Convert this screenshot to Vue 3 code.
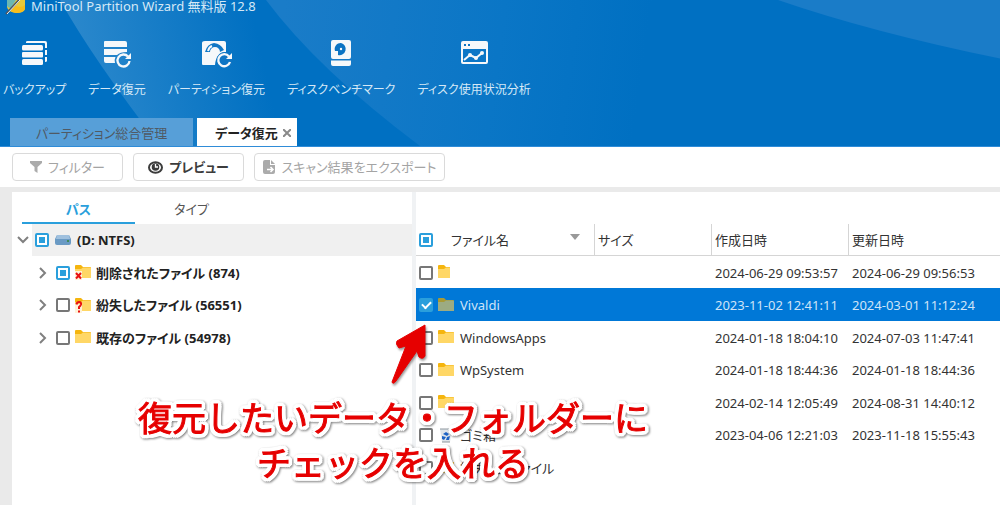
<script setup>
import { ref } from 'vue'

const tools = [
  { id: 'backup', label: 'バックアップ' },
  { id: 'data', label: 'データ復元' },
  { id: 'partition', label: 'パーティション復元' },
  { id: 'bench', label: 'ディスクベンチマーク' },
  { id: 'usage', label: 'ディスク使用状況分析' },
]

const tree = ref([
  { label: '削除されたファイル (874)', mark: '×', checked: false, partial: true },
  { label: '紛失したファイル (56551)', mark: '?', checked: false, partial: false },
  { label: '既存のファイル (54978)', mark: '', checked: false, partial: false },
])

const files = ref([
  { name: '', created: '2024-06-29 09:53:57', modified: '2024-06-29 09:56:53', icon: 'half', checked: false },
  { name: 'Vivaldi', created: '2023-11-02 12:41:11', modified: '2024-03-01 11:12:24', icon: 'folder', checked: true },
  { name: 'WindowsApps', created: '2024-01-18 18:04:10', modified: '2024-07-03 11:47:41', icon: 'folder', checked: false },
  { name: 'WpSystem', created: '2024-01-18 18:44:36', modified: '2024-01-18 18:44:36', icon: 'folder', checked: false },
  { name: '', created: '2024-02-14 12:05:49', modified: '2024-08-31 14:40:12', icon: 'folder', checked: false },
  { name: 'ゴミ箱', created: '2023-04-06 12:21:03', modified: '2023-11-18 15:55:43', icon: 'bin', checked: false },
  { name: '紛失したファイル', created: '', modified: '', icon: 'folder', checked: false },
])
</script>

<template>
  <div class="app">
    <header class="head">
      <svg class="beams" viewBox="0 0 1000 147" preserveAspectRatio="none" aria-hidden="true">
        <defs>
          <linearGradient id="beamA" gradientUnits="userSpaceOnUse" x1="70" y1="40" x2="250" y2="0">
            <stop offset="0" stop-color="#2b88cc" />
            <stop offset="1" stop-color="#0070c2" />
          </linearGradient>
          <linearGradient id="beamB" gradientUnits="userSpaceOnUse" x1="280" y1="40" x2="640" y2="90">
            <stop offset="0" stop-color="#1a7cc8" />
            <stop offset="0.6" stop-color="#0a76c6" />
            <stop offset="1" stop-color="#0070c2" />
          </linearGradient>
        </defs>
        <path d="M60 0Q92 58 160 147H420Q318 62 266 0Z" fill="url(#beamA)" />
        <path d="M266 0Q318 70 420 147H700V0Z" fill="url(#beamB)" />
        <path d="M778 0Q870 32 1000 59V0Z" fill="#1a7cc8" />
      </svg>

      <div class="title">
        <svg width="22" height="16" viewBox="0 0 22 16" aria-hidden="true">
          <path d="M2 0H20V9Q19 13 11 13Q3 12 2 7Z" fill="#e9c93a" />
          <path d="M2 0H11L6 8Q3 8 2 6Z" fill="#69b7b4" />
          <path d="M9 5Q15 9 20 5V9Q18 13 11 13Q7 12 5 11Z" fill="#f6bd1c" />
          <path d="M1 14L14 0" stroke="#4b5660" stroke-width="2" />
          <path d="M2 14L15 0" stroke="#e8eef2" stroke-width="1" />
        </svg>
        <span>MiniTool Partition Wizard 無料版 12.8</span>
      </div>

      <nav class="tools">
        <button v-for="t in tools" :key="t.id" class="tool" type="button">
          <svg width="32" height="30" viewBox="0 0 32 30" fill="#f6f8fa" aria-hidden="true">
            <template v-if="t.id === 'backup'">
              <rect x="3" y="6" width="21" height="5.5" rx="1.5" />
              <rect x="3" y="13" width="21" height="5.5" rx="1" />
              <rect x="3" y="20" width="21" height="6" rx="1.5" />
              <path d="M7 4V3Q7 2 8.500 2H26Q28 2 28 4V9H26V5Q26 4 25 4ZM26 11H28V16H26ZM26 18H28V22Q28 23 26 23Z" />
            </template>
            <template v-else-if="t.id === 'data'">
              <path d="M3 3Q3 2 4 2H24Q26 2 26 4V8H3ZM3 10H26V13Q19 13 16 16H3ZM3 18H14.500Q13 21 14 24H5Q3 24 3 22Z" />
              <path d="M27 17.500A6 6 0 1 0 28.500 22" fill="none" stroke="#f6f8fa" stroke-width="2.300" />
              <path d="M30 14V20H24Z" />
            </template>
            <template v-else-if="t.id === 'partition'">
              <path d="M5 2H24Q26 2 26 4V13Q16 13 15 26H3Q2 26 2 25V4Q2 2 5 2Z" />
              <path d="M5 13Q7 5 14 4Q21 5 24 11L20 13A5 5 0 0 0 10 13Z" fill="#1177c5" />
              <path d="M8 12Q9 8 12 7M12 13A3 3 0 0 1 17 11" fill="none" stroke="#f6f8fa" stroke-width="2" />
              <circle cx="14" cy="13" r="1.500" />
              <circle cx="25" cy="21" r="8" fill="#0f75c4" />
              <path d="M29 17.500A6 6 0 1 0 30 23" fill="none" stroke="#f6f8fa" stroke-width="2.300" />
              <path d="M32 14V20H26Z" />
            </template>
            <template v-else-if="t.id === 'bench'">
              <path d="M8 1H24Q26 1 26 3V18Q26 20 24 20H8Q6 20 6 18V3Q6 1 8 1ZM6 21.500H26V25Q26 27 24 27H8Q6 27 6 25Z" />
              <path d="M16 4A6 6 0 1 1 13 16V12H10A6 6 0 0 1 16 4Z" fill="#0b73c3" />
              <circle cx="16" cy="10" r="1.200" />
            </template>
            <template v-else>
              <path fill-rule="evenodd" d="M5 2H28Q30 2 30 4V23Q30 25 28 25H5Q3 25 3 23V4Q3 2 5 2ZM5 10V23H28V10Z" />
              <path d="M6 5H8V7H6ZM10 5H12V7H10Z" fill="#0b73c3" />
              <path d="M6 21L12 16L18 19L24 14" fill="none" stroke="#f6f8fa" stroke-width="2" />
              <circle cx="12" cy="16" r="2" /><circle cx="18" cy="19" r="2" /><circle cx="24" cy="14" r="2" />
            </template>
          </svg>
          <span>{{ t.label }}</span>
        </button>
      </nav>

      <div class="tabs">
        <button class="tab" type="button">パーティション総合管理</button>
        <button class="tab active" type="button">
          データ復元
          <svg width="8" height="8" viewBox="0 0 8 8" aria-hidden="true"><path d="M0 0L8 8M8 0L0 8" stroke="#8a8a8a" stroke-width="2" /></svg>
        </button>
      </div>
    </header>

    <div class="actions">
      <button class="act" type="button" disabled>
        <svg width="12" height="12" viewBox="0 0 12 12" aria-hidden="true"><path d="M0 0H12V2L7.500 6V12L4.500 10V6L0 2Z" fill="#ababab" /></svg>
        フィルター
      </button>
      <button class="act strong" type="button">
        <svg width="15" height="13" viewBox="0 0 15 13" aria-hidden="true">
          <ellipse cx="7.500" cy="6.500" rx="6.500" ry="5.300" fill="#fff" stroke="#3c3c3c" stroke-width="2" />
          <circle cx="7.500" cy="6" r="3.800" fill="#3c3c3c" />
          <path d="M7.500 3V6H10" fill="none" stroke="#fff" stroke-width="1.300" />
        </svg>
        プレビュー
      </button>
      <button class="act export" type="button" disabled>
        <svg width="13" height="14" viewBox="0 0 13 14" aria-hidden="true">
          <path d="M2 0H7V5H12V12Q12 14 10 14H2Q0 14 0 12V2Q0 0 2 0Z" fill="#ababab" />
          <path d="M8 0L12 4H8Z" fill="#ababab" />
          <path d="M4 9.500H10M7.500 7L10 9.500L7.500 12" fill="none" stroke="#fff" stroke-width="1.500" />
        </svg>
        スキャン結果をエクスポート
      </button>
    </div>

    <main class="work">
      <section class="side">
        <div class="views">
          <button class="view on" type="button">パス</button>
          <button class="view" type="button">タイプ</button>
        </div>
        <ul class="tree">
          <li class="root">
            <svg class="chev" width="12" height="8" viewBox="0 0 12 8" aria-hidden="true"><path d="M1 1L6 6L11 1" fill="none" stroke="#808080" stroke-width="2" /></svg>
            <label>
              <input type="checkbox" :indeterminate="true" />
              <svg width="16" height="12" viewBox="0 0 16 12" aria-hidden="true">
                <path d="M0 5L2 1H14L16 5V9Q16 11 14 11H2Q0 11 0 9Z" fill="#6a9ac4" />
                <path d="M2 1H14L15 5H1Z" fill="#9fc0de" />
                <rect x="12" y="6" width="2" height="2" fill="#3f8a5a" />
              </svg>
              <span>(D: NTFS)</span>
            </label>
          </li>
          <li v-for="n in tree" :key="n.label" class="node">
            <svg class="chev" width="8" height="12" viewBox="0 0 8 12" aria-hidden="true"><path d="M1 1L6 6L1 11" fill="none" stroke="#808080" stroke-width="2" /></svg>
            <label>
              <input v-model="n.checked" type="checkbox" :indeterminate="n.partial" />
              <svg width="16" height="15" viewBox="0 0 16 15" aria-hidden="true">
                <path d="M0 1Q0 0 1 0H6L8 2H15Q16 2 16 3V5H0Z" fill="#f5b50e" />
                <path d="M0 4H6L8 2.500H15Q16 2.500 16 3.500V13H0Z" fill="#ffd766" />
                <template v-if="n.mark">
                  <path d="M0 6H7V15H0Z" fill="#fff3d8" />
                  <path v-if="n.mark === '×'" d="M1 8L6 13.500M6 8L1 13.500" stroke="#e81010" stroke-width="2" />
                  <path v-else d="M1.500 6.500Q2 4 4 4Q6.500 4 6 6.500Q5.500 8 4 9V11M4 12.500V14.500" fill="none" stroke="#e81010" stroke-width="2" />
                </template>
              </svg>
              <span>{{ n.label }}</span>
            </label>
          </li>
        </ul>
      </section>

      <section class="list">
        <table>
          <colgroup><col class="c-name" /><col class="c-size" /><col class="c-made" /><col /></colgroup>
          <thead>
            <tr>
              <th>
                <div class="cell">
                  <input type="checkbox" aria-label="すべて選択" :indeterminate="true" />
                  <span class="fname">ファイル名</span>
                  <svg class="sort" width="10" height="6" viewBox="0 0 10 6" aria-hidden="true"><path d="M0 0H10L5 6Z" fill="#999" /></svg>
                </div>
              </th>
              <th>サイズ</th>
              <th>作成日時</th>
              <th>更新日時</th>
            </tr>
          </thead>
          <tbody>
            <tr v-for="(f, i) in files" :key="i" :class="{ sel: f.checked }">
              <td>
                <label class="cell">
                  <input v-model="f.checked" type="checkbox" />
                  <svg width="16" height="15" viewBox="0 0 16 15" aria-hidden="true">
                    <template v-if="f.icon === 'bin'">
                      <path d="M2 1H14L12 14H4Z" fill="#dfe5ea" />
                      <path d="M2 1H14M4 14H12" stroke="#8e979e" stroke-width="1" />
                      <path d="M5 6L8 4L11 6L9 8ZM4 8L8 9L6 12L4 11ZM9 9L12 8L11 12H8Z" fill="#1c62c4" />
                    </template>
                    <template v-else-if="f.icon === 'half'">
                      <path d="M0 1Q0 0 1 0H6L8 2H12V5H0Z" fill="#f5b50e" />
                      <path d="M0 4H6L8 2.500H12V13H0Z" fill="#ffd766" />
                    </template>
                    <template v-else>
                      <path d="M0 1Q0 0 1 0H6L8 2H15Q16 2 16 3V5H0Z" :fill="f.checked ? '#a89a35' : '#f5b50e'" />
                      <path d="M0 4H6L8 2.500H15Q16 2.500 16 3.500V13H0Z" :fill="f.checked ? '#9cab82' : '#ffd766'" />
                    </template>
                  </svg>
                  <span>{{ f.name }}</span>
                </label>
              </td>
              <td></td>
              <td>{{ f.created }}</td>
              <td>{{ f.modified }}</td>
            </tr>
          </tbody>
        </table>
      </section>
    </main>

    <svg class="arrow" width="44" height="68" viewBox="0 0 44 68" aria-hidden="true">
      <path d="M40 4L12 20Q10 23 14 27L21 25L7 61Q8 64 11 60L32 30L34 36Q38 39 40 35Z" fill="#e60000" stroke="#e60000" stroke-width="1" stroke-linejoin="round" />
    </svg>
    <p class="note">復元したいデータ・フォルダーに<br />チェックを入れる</p>
  </div>
</template>

<style>
body {
  margin: 0;
  background: #fff;
}
</style>

<style scoped>
.app {
  position: relative;
  min-height: 100vh;
  display: flex;
  flex-direction: column;
  overflow: hidden;
  font-family: "Noto Sans", "Noto Sans CJK JP", sans-serif;
  font-size: 13px;
  line-height: 18px;
  font-feature-settings: "palt";
  color: #333;
}
button {
  font: inherit;
  font-feature-settings: inherit;
  color: inherit;
  background: none;
  border: 0;
  padding: 0;
  margin: 0;
  white-space: nowrap;
}
svg {
  flex: none;
  display: block;
}
.head {
  position: relative;
  background: #0070c2;
  border-bottom: 1px solid #2f8cd8;
  color: #d5e8f6;
}
.beams {
  position: absolute;
  inset: 0;
  width: 100%;
  height: 100%;
}
.title {
  position: relative;
  display: flex;
  gap: 4px;
  padding-left: 5px;
  height: 16px;
  line-height: 12px;
}
.tools {
  position: relative;
  display: flex;
  gap: 22px;
  padding: 23px 3px 0;
  height: 79px;
  font-size: 12px;
}
.tool {
  display: flex;
  flex-direction: column;
  align-items: center;
  gap: 12px;
}
.tabs {
  position: relative;
  display: flex;
  gap: 4px;
  padding-left: 10px;
}
.tab {
  display: flex;
  align-items: center;
  justify-content: center;
  gap: 5px;
  width: 183px;
  height: 28px;
  padding-top: 2px;
  background: #579fd8;
  color: #505a64;
}
.tab.active {
  width: 100px;
  padding-left: 12px;
  background: #fff;
  color: #222;
  font-weight: 700;
}
.actions {
  display: flex;
  gap: 10px;
  padding: 6px 12px;
}
.act {
  display: flex;
  align-items: center;
  justify-content: center;
  gap: 6px;
  box-sizing: border-box;
  width: 111px;
  height: 28px;
  border: 1px solid #dadada;
  border-radius: 4px;
  color: #a4a4a4;
}
.act.export {
  width: 191px;
}
.act.strong {
  color: #3c3c3c;
  font-weight: 700;
}
.work {
  flex: 1;
  display: flex;
  background: #fff;
  border-top: 5px solid #eaeaea;
  border-left: 12px solid #eaeaea;
}
.side {
  flex: none;
  width: 400px;
  border-right: 4px solid #f0f2f4;
}
.views {
  display: flex;
  padding-left: 10px;
}
.view {
  width: 113px;
  height: 32px;
  padding-top: 4px;
  border-bottom: 2px solid transparent;
  color: #555;
}
.view.on {
  border-color: #2a9fdc;
  color: #2a9fdc;
  font-weight: 700;
}
.tree {
  list-style: none;
  margin: 0;
  padding: 0;
  font-weight: 700;
  color: #222;
}
.tree li {
  display: flex;
  align-items: center;
  height: 32px;
}
.tree li:nth-child(even) {
  height: 33px;
}
.tree label {
  flex: 1;
  display: flex;
  align-items: center;
  gap: 6px;
  height: 100%;
}
.root {
  padding-left: 5px;
}
.root label {
  margin-left: 3px;
  padding-left: 3px;
  background: #f0f0f0;
}
.node {
  padding-left: 27px;
}
.node label {
  margin-left: 9px;
  gap: 5px;
}
input {
  appearance: none;
  flex: none;
  box-sizing: border-box;
  width: 14px;
  height: 14px;
  margin: 0;
  border: 2px solid #777;
  border-radius: 2px;
  background: #fff;
}
input:indeterminate {
  border-color: #2a9fdc;
  background: linear-gradient(#2a9fdc, #2a9fdc) center / 6px 6px no-repeat #fff;
}
input:checked {
  border-color: #2a9fdc;
  background: #2a9fdc;
  display: grid;
  place-items: center;
}
input:checked::after {
  content: "";
  width: 7px;
  height: 4px;
  border: solid #fff;
  border-width: 0 0 2px 2px;
  transform: translateY(-1px) rotate(-45deg);
}
.list {
  flex: 1;
  min-width: 0;
}
table {
  width: 100%;
  margin-top: 32px;
  table-layout: fixed;
  border-collapse: separate;
  border-spacing: 0;
}
.c-name {
  width: 178px;
}
.c-size {
  width: 117px;
}
.c-made {
  width: 137px;
}
th,
td {
  box-sizing: border-box;
  padding: 0 0 0 3px;
  text-align: left;
  font-weight: 400;
  white-space: nowrap;
}
td {
  padding-top: 1px;
}
th {
  height: 32px;
  border-bottom: 1px solid #d5d5d5;
}
th + th {
  border-left: 1px solid #d5d5d5;
}
td + td {
  padding-left: 4px;
}
tbody tr {
  height: 32px;
}
tbody tr:nth-child(even) {
  height: 33px;
}
.sel {
  background: #0078d7;
  color: #cfe4f7;
}
.cell {
  display: flex;
  align-items: center;
  gap: 5px;
}
.cell span {
  padding-left: 1px;
}
.cell .fname {
  flex: 1;
  padding-left: 13px;
}
.sort {
  margin: 0 14px 6px 0;
}
.arrow {
  position: absolute;
  left: 385px;
  top: 321px;
  filter: drop-shadow(1px 2px 1px rgba(0, 0, 0, 0.4));
}
.note {
  position: absolute;
  left: 138px;
  top: 394px;
  width: 510px;
  margin: 0;
  text-align: center;
  white-space: nowrap;
  font-family: "Noto Sans CJK JP", sans-serif;
  font-size: 34px;
  line-height: 45px;
  font-feature-settings: normal;
  color: #e60000;
  -webkit-text-stroke: 1px #e60000;
  text-shadow: 4px 0 #fff, -4px 0 #fff, 0 4px #fff, 0 -4px #fff, 3px 3px #fff, -3px 3px #fff, 3px -3px #fff,
    -3px -3px #fff, 4px 2px #fff, -4px 2px #fff, 2px 4px #fff, -2px 4px #fff, 4px -2px #fff, -4px -2px #fff,
    2px -4px #fff, -2px -4px #fff, 2px 0 #fff, -2px 0 #fff, 0 2px #fff, 0 -2px #fff;
  filter: drop-shadow(1px 1px 1px rgba(0, 0, 0, 0.5));
}
</style>
